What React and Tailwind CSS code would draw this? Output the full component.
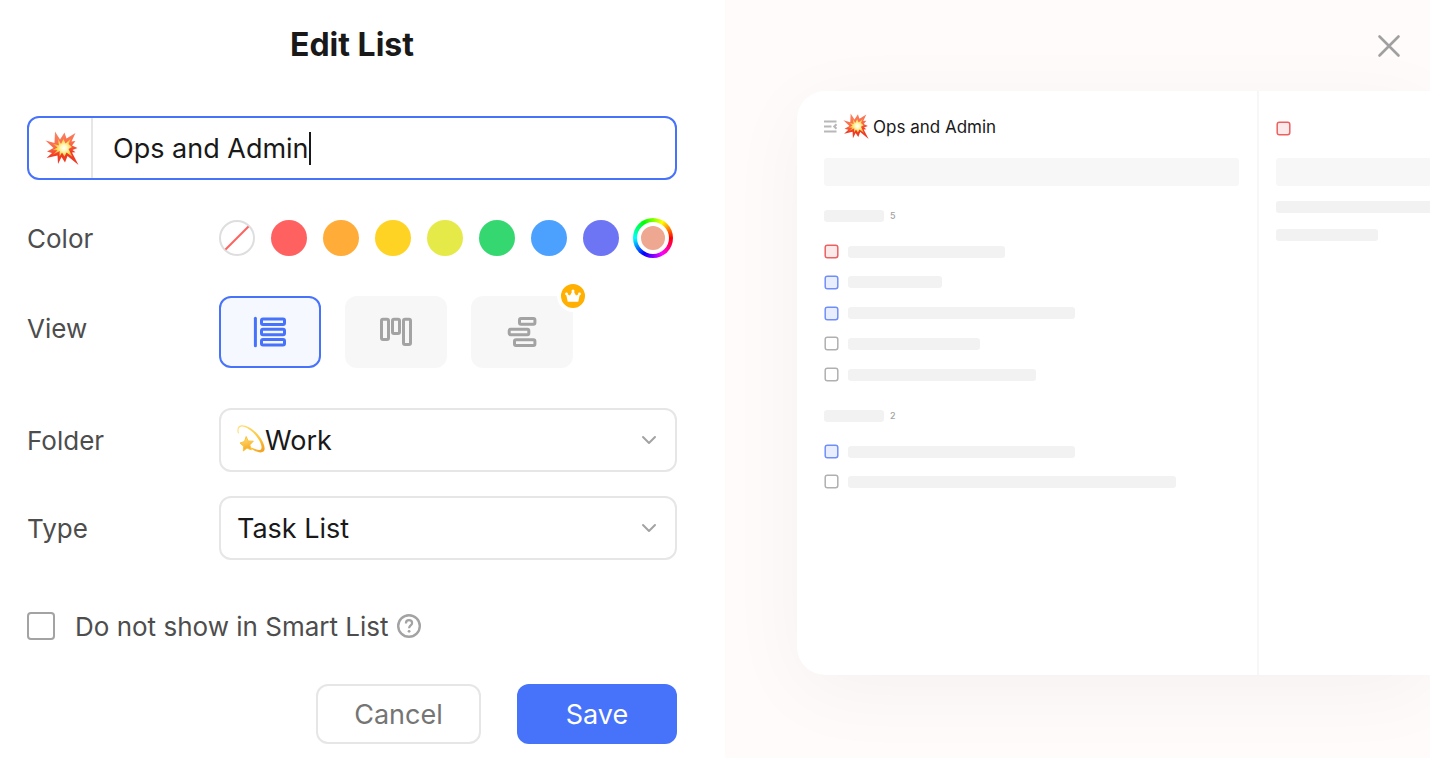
import { useId, useState } from "react";

function BoomEmoji({ className }) {
  const id = useId();
  return (
    <svg viewBox="0 0 34 34" className={className} aria-hidden="true">
      <defs>
        <linearGradient id={`${id}a`} x1="0" y1="0" x2="0.2" y2="1">
          <stop offset="0" stopColor="#fb8a6c" />
          <stop offset="0.5" stopColor="#f9694a" />
          <stop offset="0.75" stopColor="#f03a22" />
          <stop offset="1" stopColor="#ee3a26" />
        </linearGradient>
        <radialGradient id={`${id}b`} cx="19" cy="17" r="11" gradientUnits="userSpaceOnUse">
          <stop offset="0" stopColor="#ffffff" />
          <stop offset="0.3" stopColor="#fff6b8" />
          <stop offset="0.65" stopColor="#ffd84a" />
          <stop offset="1" stopColor="#ff9a3a" />
        </radialGradient>
      </defs>
      <path
        fill={`url(#${id}a)`}
        d="M10 .5 15 8.500 19.500 1.500 21.500 7.500 30.500 2 26.500 10.500l4-.5-3.500 4.500L32.500 17 27.500 19l3 2.200-3.500.3L33.500 34 22.500 25l-2.500 6.500-3.500-5.500L13 33l-.5-8.500L1.500 27 7 22 2 20.500l6.500-3.500L.500 9.500 9.500 12z"
      />
      <path
        fill={`url(#${id}b)`}
        d="m12.500 7 3.500 6 2.500-5 2 4.500L26 7.500 23.500 13l3.500 3-3.500 2 4 8-6-4.500-2 4-2.500-4-2.500 4 .2-5.500L8 23.500l4.500-4.300-5-.2 5-2.500-5-4 6.500 2z"
      />
    </svg>
  );
}

function DizzyEmoji({ className }) {
  const id = useId();
  return (
    <svg viewBox="0 0 30 30" className={className} aria-hidden="true">
      <defs>
        <linearGradient id={`${id}a`} x1="0" y1="0" x2="1" y2="1">
          <stop offset="0" stopColor="#ffdf7a" />
          <stop offset="0.6" stopColor="#fcc93f" />
          <stop offset="1" stopColor="#f29c1f" />
        </linearGradient>
        <linearGradient id={`${id}b`} x1="0" y1="0" x2="0.3" y2="1">
          <stop offset="0" stopColor="#ffe88a" />
          <stop offset="1" stopColor="#f8a71c" />
        </linearGradient>
      </defs>
      <path
        fill={`url(#${id}a)`}
        d="M2 9.500C.7 5.800 1.500 1.600 5.600 1.300 11 .9 19.500 6.500 24.500 14c3.500 5.300 5.500 11.500 3 13.600-2.700 2.100-9-.2-12.800-3l.9-1.200c3.300 1.900 7.500 3.300 9.200 2 1.800-1.500.1-6.400-2.600-10.600C17.700 8 10.200 2.300 5.800 2.600 2.500 2.800 1.900 6 2.900 9.200z"
      />
      <path
        fill={`url(#${id}b)`}
        d="m10.200 12.500 1.900 4.500 5.200.2-3.500 3.700 1.500 5-4.300-1.900L7.300 27l.3-4.700L4 19l4.500-1.500z"
        stroke="#fbc23a"
        strokeWidth="1"
        strokeLinejoin="round"
      />
    </svg>
  );
}

function BarsIcon({ rects, line }) {
  return (
    <svg viewBox="0 0 36 36" className="size-9" fill="none" stroke="currentColor" strokeWidth="3" aria-hidden="true">
      {line && <path d="M3.400 4.300v27.400" strokeLinecap="round" />}
      {rects.map(([x, y, w, h]) => (
        <rect key={`${x}-${y}`} x={x} y={y} width={w} height={h} rx="1.500" />
      ))}
    </svg>
  );
}

const VIEWS = [
  { name: "List", line: true, rects: [[9.5, 5, 23, 5.6], [9.5, 15.2, 23, 5.6], [9.5, 25.4, 23, 5.6]] },
  { name: "Kanban", rects: [[3.5, 5.2, 7, 20.4], [14.5, 5.2, 7, 14.2], [25.5, 5.2, 7, 25.2]] },
  { name: "Timeline", premium: true, rects: [[15.5, 4.6, 15.4, 5.7], [5.2, 15.2, 19.6, 5.6], [10.5, 25.7, 20.4, 5.7]] },
];

const COLORS = [
  { name: "Red", bg: "bg-[#ff6161]" },
  { name: "Orange", bg: "bg-[#ffac38]" },
  { name: "Yellow", bg: "bg-[#ffd324]" },
  { name: "Lime", bg: "bg-[#e6ea49]" },
  { name: "Green", bg: "bg-[#35d870]" },
  { name: "Blue", bg: "bg-[#4ca1ff]" },
  { name: "Purple", bg: "bg-[#6e75f4]" },
];

function Chevron() {
  return (
    <svg
      viewBox="0 0 16 16"
      className="pointer-events-none absolute top-6 right-5 size-4"
      fill="none"
      stroke="#a3a3a3"
      strokeWidth="2"
      strokeLinecap="round"
      strokeLinejoin="round"
      aria-hidden="true"
    >
      <path d="m2 5 6 6 6-6" />
    </svg>
  );
}

const LABEL = "w-48 shrink-0 pt-0.5 text-[26px] leading-[62px] text-[#4d4d4d]";
const SELECT =
  "h-16 w-full appearance-none rounded-xl border-2 border-[#e6e6e6] bg-white pt-0.5 pr-14 text-[27px] text-[#191919] outline-none";

function EditForm({ name, setName }) {
  return (
    <form className="flex flex-col pt-[25px] pr-12 pb-3.5 pl-[27px]" onSubmit={(e) => e.preventDefault()}>
      <h1 className="text-center text-[32px] leading-10 font-bold text-[#191919]">Edit List</h1>

      <div className="relative mt-[51px] flex h-16 rounded-xl border-2 border-[#4772fa]">
        <button type="button" aria-label="Choose icon" className="flex w-16 items-center justify-center border-r-2 border-[#e6e6e6] pl-1">
          <BoomEmoji className="size-[34px]" />
        </button>
        <input
          aria-label="List name"
          value={name}
          onChange={(e) => setName(e.target.value)}
          className="min-w-0 flex-1 rounded-r-xl bg-transparent pt-0.5 pl-5 text-[27px] text-[#191919] outline-none"
        />
        <span className="absolute top-3.5 left-[280px] h-[33px] w-0.5 bg-[#191919]" />
      </div>

      <fieldset aria-labelledby="color-label" className="mt-[26px] flex items-center">
        <span id="color-label" className={LABEL}>Color</span>
        <div className="flex items-center gap-3.5">
          <div className="flex gap-4">
            <label className="relative size-9">
              <input type="radio" name="color" aria-label="No color" className="block size-9 appearance-none rounded-full border-2 border-[#dedede]" />
              <svg viewBox="0 0 36 36" className="pointer-events-none absolute inset-0 size-9" aria-hidden="true">
                <path d="M6.500 29.500 29.500 6.500" stroke="#ff6161" strokeWidth="2" />
              </svg>
            </label>
            {COLORS.map((c) => (
              <input key={c.name} type="radio" name="color" aria-label={c.name} className={`size-9 appearance-none rounded-full ${c.bg}`} />
            ))}
          </div>
          <label className="flex size-10 items-center justify-center rounded-full bg-[conic-gradient(from_90deg,#f00,#f0f,#00f,#0ff,#0f0,#ff0,#f00)]">
            <input
              type="radio"
              name="color"
              aria-label="Custom color"
              defaultChecked
              className="size-8 appearance-none rounded-full border-4 border-white bg-[#eea891]"
            />
          </label>
        </div>
      </fieldset>

      <div className="mt-[26px] flex items-start">
        <span className={LABEL}>View</span>
        <div className="flex gap-6">
          {VIEWS.map((v, i) => (
            <button
              key={v.name}
              type="button"
              aria-label={`${v.name} view`}
              aria-pressed={i === 0}
              className={`relative flex h-[72px] w-[102px] items-center justify-center rounded-xl ${
                i === 0 ? "border-2 border-[#4772fa] bg-[#f5f8ff] text-[#4772fa]" : "bg-[#f7f7f7] text-[#a3a3a3]"
              }`}
            >
              <BarsIcon rects={v.rects} line={v.line} />
              {v.premium && (
                <span className="absolute -top-4 -right-4 flex size-8 items-center justify-center rounded-full border-4 border-white bg-[#ffb000]">
                  <svg viewBox="0 0 24 24" className="size-6 shrink-0" fill="#fff" aria-hidden="true">
                    <path d="M6.200 10.200 9 11.400l2.200-4h1.600l2.200 4 2.800-1.200.900.800-1.300 6.200q-.1.500-.7.500H7.300q-.6 0-.7-.5L5.300 11z" />
                    <circle cx="12" cy="7" r="1.500" />
                    <circle cx="5.500" cy="9.900" r="1.400" />
                    <circle cx="18.500" cy="9.900" r="1.400" />
                  </svg>
                </span>
              )}
            </button>
          ))}
        </div>
      </div>

      <div className="mt-10 flex items-center">
        <label htmlFor="folder" className={LABEL}>Folder</label>
        <div className="relative flex-1">
          <select id="folder" className={`${SELECT} pl-11`}>
            <option>Work</option>
          </select>
          <DizzyEmoji className="pointer-events-none absolute top-4 left-[17px] size-[30px]" />
          <Chevron />
        </div>
      </div>

      <div className="mt-6 flex items-center">
        <label htmlFor="type" className={LABEL}>Type</label>
        <div className="relative flex-1">
          <select id="type" className={`${SELECT} pl-4`}>
            <option>Task List</option>
          </select>
          <Chevron />
        </div>
      </div>

      <div className="mt-12 flex items-center">
        <label className="flex items-center gap-5 text-[26px] text-[#4d4d4d]">
          <input type="checkbox" className="size-7 appearance-none rounded-sm border-2 border-[#a3a3a3]" />
          <span className="pt-0.5 leading-[34px]">Do not show in Smart List</span>
        </label>
        <button type="button" aria-label="Help" className="ml-2">
          <svg viewBox="0 0 24 24" className="size-6" fill="none" stroke="#a3a3a3" aria-hidden="true">
            <circle cx="12" cy="12" r="10.800" strokeWidth="2.400" />
            <path d="M8.900 9.400c0-2 1.300-3.200 3.100-3.200s3.100 1.100 3.100 2.800c0 2.400-3 2.500-3 5.200" strokeWidth="2.200" />
            <circle cx="12.100" cy="17.300" r="1.400" fill="#a3a3a3" stroke="none" />
          </svg>
        </button>
      </div>

      <div className="mt-10 flex justify-end gap-9">
        <button type="button" className="h-[60px] w-[165px] rounded-xl border-2 border-[#e6e6e6] pt-0.5 text-[27px] text-[#757575]">
          Cancel
        </button>
        <button type="submit" className="h-[60px] w-40 rounded-xl bg-[#4772fa] pt-0.5 text-[27px] text-white">
          Save
        </button>
      </div>
    </form>
  );
}

const BOX = {
  red: "fill-[#fce9e9] stroke-[#ec6060]",
  blue: "fill-[#e9eefe] stroke-[#6f8ef8]",
  none: "fill-white stroke-[#b0b0b0]",
};

function Box({ tone }) {
  return (
    <svg viewBox="0 0 15 15" className={`size-[15px] shrink-0 ${BOX[tone]}`} strokeWidth="1.500" aria-hidden="true">
      <rect x="1.200" y="1.200" width="12.600" height="12.600" rx="2.200" />
    </svg>
  );
}

function Row({ tone, width }) {
  return (
    <li className="flex items-center gap-[9px]">
      <Box tone={tone} />
      <span className={`h-3 rounded-[3px] bg-[#f2f2f2] ${width}`} />
    </li>
  );
}

function GroupTitle({ count }) {
  return (
    <div className="flex h-3 items-center gap-1.5">
      <span className="h-3 w-[60px] rounded-[3px] bg-[#f2f2f2]" />
      <span className="text-[9px] leading-3 font-medium text-[#a3a3a3]">{count}</span>
    </div>
  );
}

function Preview({ name }) {
  return (
    <section aria-label="Preview" className="relative overflow-hidden bg-[#fffbfa] pt-[91px] pb-[83px] pl-[72px]">
      <button type="button" aria-label="Close" className="absolute top-[34px] right-[29px]">
        <svg viewBox="0 0 24 24" className="size-6" stroke="#a0a0a0" strokeWidth="2.600" strokeLinecap="round" aria-hidden="true">
          <path d="M2.500 2.500 21.500 21.500M21.500 2.500 2.500 21.500" />
        </svg>
      </button>
      <div className="grid h-full grid-cols-[462fr_171fr] rounded-l-[28px] bg-white shadow-[0_16px_80px_rgba(0,0,0,0.045)]">
        <div className="border-r-2 border-[#f7f7f7] pt-[21px] pr-[18px] pl-[27px]">
          <div className="flex h-7 items-center">
            <svg viewBox="0 0 14 14" className="size-3.5 shrink-0" fill="none" stroke="#b8b8b8" strokeWidth="2" aria-hidden="true">
              <path d="M0 2.500h12.500M0 7.500h7.500M0 12.500h12.500M12.500 5.200 10.200 7.500l2.300 2.300" />
            </svg>
            <BoomEmoji className="ml-[5px] size-[26px]" />
            <span className="ml-1 pt-0.5 text-[17px] leading-[26px] text-[#191919]">{name}</span>
          </div>
          <div className="mt-[18px] h-7 rounded-[3px] bg-[#f7f7f7]" />
          <div className="mt-6">
            <GroupTitle count="5" />
            <ul className="mt-[22px] flex h-[138px] flex-col justify-between">
              <Row tone="red" width="w-[157px]" />
              <Row tone="blue" width="w-[94px]" />
              <Row tone="blue" width="w-[227px]" />
              <Row tone="none" width="w-[132px]" />
              <Row tone="none" width="w-[188px]" />
            </ul>
          </div>
          <div className="mt-7">
            <GroupTitle count="2" />
            <ul className="mt-[22px] flex h-[45px] flex-col justify-between">
              <Row tone="blue" width="w-[227px]" />
              <Row tone="none" width="w-[328px]" />
            </ul>
          </div>
        </div>
        <div className="flex flex-col pt-[30px] pl-[17px]">
          <Box tone="red" />
          <span className="mt-[22px] h-7 rounded-l-[3px] bg-[#f7f7f7]" />
          <span className="mt-[15px] h-3 rounded-l-[3px] bg-[#f2f2f2]" />
          <span className="mt-4 h-3 w-[102px] rounded-[3px] bg-[#f2f2f2]" />
        </div>
      </div>
    </section>
  );
}

export default function App() {
  const [name, setName] = useState("Ops and Admin");
  return (
    <main className="grid min-h-screen grid-cols-[725fr_705fr] bg-white font-['Inter',sans-serif]">
      <EditForm name={name} setName={setName} />
      <Preview name={name} />
    </main>
  );
}
